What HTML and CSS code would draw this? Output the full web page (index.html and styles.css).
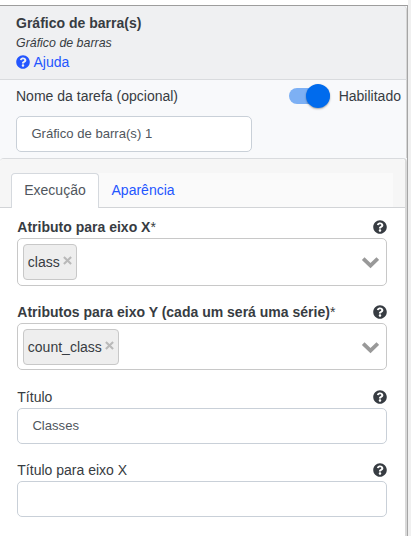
FILE: index.html
```html
<!DOCTYPE html>
<html lang="pt-BR">
<head>
<meta charset="utf-8">
<title>Gráfico de barra(s)</title>
<link rel="stylesheet" href="styles.css">
</head>
<body>
<svg class="defs" width="0" height="0" aria-hidden="true">
  <symbol id="help" viewBox="0 0 512 512"><path fill="currentColor" d="M504 256c0 136.997-111.043 248-248 248S8 392.997 8 256C8 119.083 119.043 8 256 8s248 111.083 248 248zM262.655 90c-54.497 0-89.255 22.957-116.549 63.758-3.536 5.286-2.353 12.415 2.715 16.258l34.699 26.31c5.205 3.947 12.621 3.008 16.665-2.122 17.864-22.658 30.113-35.797 57.303-35.797 20.429 0 45.698 13.148 45.698 32.958 0 14.976-12.363 22.667-32.534 33.976C247.128 238.528 216 254.941 216 296v4c0 6.627 5.373 12 12 12h56c6.627 0 12-5.373 12-12v-1.333c0-28.462 83.186-29.647 83.186-106.667 0-58.002-60.165-102-116.531-102zM256 338c-25.365 0-46 20.635-46 46 0 25.364 20.635 46 46 46s46-20.636 46-46c0-25.364-20.635-46-46-46z"/></symbol>
  <symbol id="chevron" viewBox="0 0 18 12"><path fill="none" stroke="#999" stroke-width="3.8" d="M2.2 1.6 9.5 8.7 16.8 1.6"/></symbol>
  <symbol id="cross" viewBox="0 0 10 10"><path fill="none" stroke="#b9b9b9" stroke-width="2.3" d="M1 1 9 9M9 1 1 9"/></symbol>
</svg>
<div class="panel">
  <header class="panel-header">
    <div class="title">Gráfico de barra(s)</div>
    <div class="subtitle">Gráfico de barras</div>
    <a class="help-link"><svg class="help"><use href="#help"/></svg>Ajuda</a>
  </header>
  <section class="task">
    <div class="task-row">
      <label>Nome da tarefa (opcional)</label>
      <div class="switch-group"><span class="switch"><span class="knob"></span></span><span>Habilitado</span></div>
    </div>
    <div class="input task-name">Gráfico de barra(s) 1</div>
  </section>
  <section class="card">
    <div class="card-header">
      <nav class="tabs"><a class="tab active">Execução</a><a class="tab">Aparência</a></nav>
    </div>
    <div class="form">
      <div class="field">
        <div class="label-row"><span><b>Atributo para eixo X</b>*</span><svg class="help"><use href="#help"/></svg></div>
        <div class="select"><span class="tag">class<svg class="cross"><use href="#cross"/></svg></span><svg class="chevron"><use href="#chevron"/></svg></div>
      </div>
      <div class="field second">
        <div class="label-row"><span><b>Atributos para eixo Y (cada um será uma série)</b>*</span><svg class="help"><use href="#help"/></svg></div>
        <div class="select"><span class="tag">count_class<svg class="cross"><use href="#cross"/></svg></span><svg class="chevron"><use href="#chevron"/></svg></div>
      </div>
      <div class="field third">
        <div class="label-row"><span>Título</span><svg class="help"><use href="#help"/></svg></div>
        <div class="input">Classes</div>
      </div>
      <div class="field fourth">
        <div class="label-row"><span>Título para eixo X</span><svg class="help"><use href="#help"/></svg></div>
        <div class="input"></div>
      </div>
    </div>
  </section>
</div>
</body>
</html>
```
FILE: styles.css
```css
* { box-sizing: border-box; }
html { height: 100%; overflow: hidden; background: #f0f0f0; }
body {
  margin: 0;
  height: 536px;
  width: 408px;
  padding-top: 5px;
  background: #fff;
  color: #373c42;
  font: 14.03px/20px "Liberation Sans", Arial, sans-serif;
  overflow: hidden;
}
.defs { display: none; }
.panel {
  height: 531px;
  border-top: 1px solid #9d9d9d;
  border-right: 1px solid #a5a5a5;
  background: #f8f9fb;
}
.panel-header {
  height: 74px;
  padding: 7px 16px 0;
  background: #eff0f2;
  border-bottom: 1px solid #d9dbde;
  border-right: 1px solid #d6d6d6;
  border-top-right-radius: 4px;
}
.title { font-weight: bold; line-height: 20px; }
.subtitle { font-size: 12.4px; font-style: italic; line-height: 18px; padding-top: 1px; }
.help-link { display: flex; align-items: center; gap: 3.5px; color: #2456ff; line-height: 20px; }
.help { width: 14px; height: 14px; flex: none; display: block; }
.task { height: 78px; padding: 6px 5px 0 16px; border-right: 1px solid #d6d6d6; }
.task-row { display: flex; justify-content: space-between; align-items: center; height: 20px; }
.switch-group { display: flex; align-items: center; gap: 9px; }
.switch { width: 41px; height: 16px; border-radius: 8px; background: #7db0f4; display: flex; align-items: center; justify-content: flex-end; }
.knob { width: 24px; height: 24px; flex: none; border-radius: 50%; background: #006bed; box-shadow: 0 1px 2px rgba(0, 0, 0, .35); }
.input {
  height: 36px;
  padding: 0 14.4px;
  border: 1px solid #c9d0d8;
  border-radius: 5px;
  background: #fff;
  color: #50565d;
  font-size: 13.1px;
  line-height: 34px;
}
.task-name { width: 236px; margin-top: 10px; }
.card { height: 378px; border-top: 1px solid #d9dbde; border-right: 2px solid #d9d9d9; border-radius: 4px 4px 0 0; background: #fff; }
.card-header { height: 49px; padding: 14px 12px 0 11px; background: #f6f6f6; border-bottom: 1px solid #d2d4d7; border-radius: 4px 4px 0 0; }
.tabs { display: flex; height: 35px; background: linear-gradient(#fafafa, #fafafa) 0 0 / 100% 34px no-repeat; }
.tab { height: 34px; padding: 0 12px; line-height: 33px; color: #2456ff; border: 1px solid transparent; border-bottom: 0; }
.tab.active { width: 88px; height: 35px; padding: 0 12.2px; background: #fff; color: #50565d; border-color: #d5d9de; border-radius: 4px 4px 0 0; }
.tab.active + .tab { padding-left: 11.5px; }
.form { padding: 9px 18px 0 17px; }
.label-row { display: flex; justify-content: space-between; align-items: center; height: 20px; }
.label-row span { padding-left: .3px; }
.select { display: flex; align-items: center; justify-content: space-between; height: 48px; margin-top: 1px; padding: 0 7px 0 5px; border: 1px solid #c8c8c8; border-radius: 5px; }
.tag { display: flex; align-items: center; gap: 3px; height: 36px; padding: 0 4px 0 3.8px; background: #eee; border: 1px solid #c8c8c8; border-radius: 4px; }
.cross { width: 9px; height: 9px; margin-top: -3px; }
.chevron { width: 18px; height: 12px; margin-top: 2px; }
.second { margin-top: 16px; }
.second .select { height: 47px; }
.third { margin-top: 17px; }
.fourth { margin-top: 16px; }
.field .input { margin-top: 1px; }
```
